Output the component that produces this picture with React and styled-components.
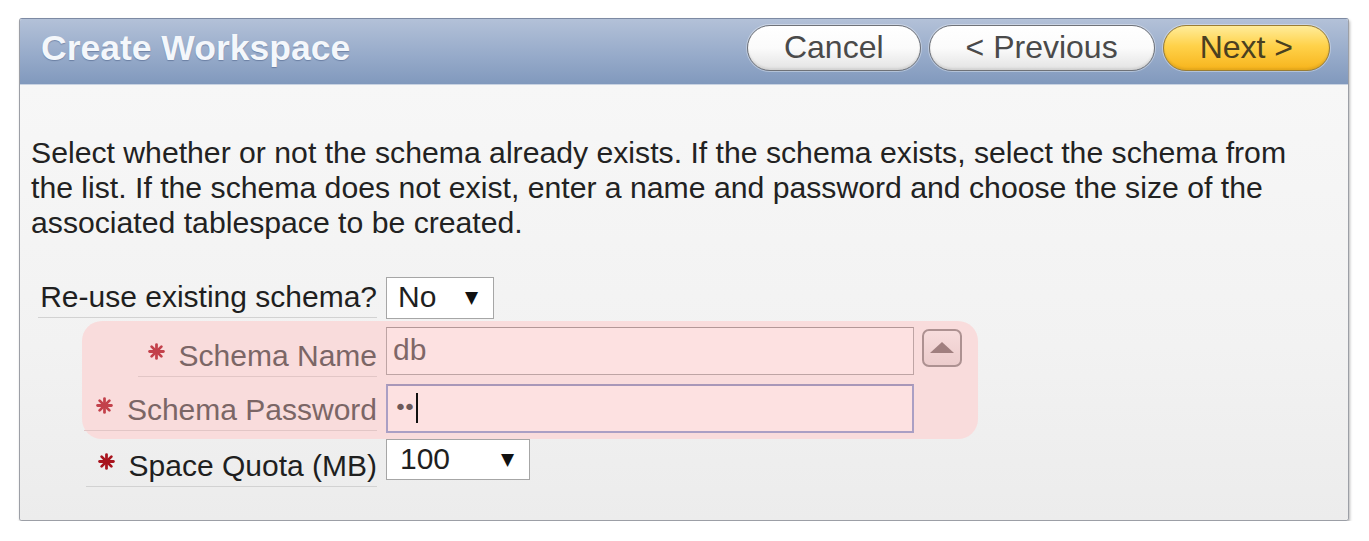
import React from "react";
import styled, { createGlobalStyle } from "styled-components";

const Global = createGlobalStyle`
  html, body {
    margin: 0;
    padding: 0;
    background: #ffffff;
  }
  body {
    font-family: "Liberation Sans", Arial, sans-serif;
  }
`;

// Panel
const Panel = styled.div`
  box-sizing: border-box;
  margin: 18px 0 0 19px;
  width: 1330px;
  height: 503px;
  border: 1px solid #9c9fa6;
  border-top-color: #7d8aa3;
  border-radius: 3px;
  box-shadow: 1px 2px 3px rgba(0, 0, 0, 0.28);
  display: flex;
  flex-direction: column;
  overflow: hidden;
`;

const Header = styled.div`
  box-sizing: border-box;
  height: 66px;
  flex: none;
  display: flex;
  align-items: flex-start;
  justify-content: space-between;
  padding: 6px 18px 0 21px;
  background: linear-gradient(#b3c1d8 0%, #97abca 55%, #8199bd 100%);
  border-bottom: 1px solid #c9d3e2;
`;

const Title = styled.h1`
  margin: 3px 0 0;
  font-size: 35.5px;
  line-height: 40px;
  font-weight: bold;
  color: #f4f7fb;
  text-shadow: 0 1px 1px rgba(60, 80, 120, 0.45);
`;

const Buttons = styled.div`
  display: flex;
  gap: 8px;
`;

const Btn = styled.button`
  box-sizing: border-box;
  height: 46px;
  padding: 0 36px 3px;
  border-radius: 23px;
  border: 1.5px solid ${(p) => (p.primary ? "#9a7d34" : "#6f7278")};
  background: ${(p) =>
    p.primary
      ? "linear-gradient(#ffec9a 0%, #ffd24a 45%, #f7b41c 100%)"
      : "linear-gradient(#ffffff 0%, #fbfbfb 50%, #e3e3e3 100%)"};
  box-shadow: 0 0 0 1px rgba(255, 255, 255, 0.35), inset 0 -2px 2px rgba(0, 0, 0, 0.08);
  font-family: "Liberation Sans", Arial, sans-serif;
  font-size: 32px;
  line-height: 40px;
  color: ${(p) => (p.primary ? "#4a4020" : "#4a4a4a")};
  cursor: pointer;
`;

// Body
const Body = styled.div`
  flex: 1;
  padding: 50px 11px 0;
  background: linear-gradient(#f7f7f7 0%, #f2f2f2 60%, #ececec 100%);
`;

const Intro = styled.p`
  margin: 0;
  max-width: 1295px;
  font-size: 30.2px;
  line-height: 35px;
  color: #222222;
`;

const Form = styled.div`
  margin-top: 37px;
  display: flex;
  flex-direction: column;
`;

const Row = styled.div`
  display: flex;
  align-items: flex-start;
`;

const LabelCell = styled.div`
  width: ${(p) => p.width}px;
  flex: none;
  display: flex;
  justify-content: flex-end;
  margin-top: ${(p) => p.drop || 0}px;
`;

const LabelText = styled.label`
  display: inline-flex;
  align-items: center;
  padding-left: ${(p) => p.pad || 2}px;
  font-size: 30px;
  line-height: 40px;
  color: ${(p) => (p.muted ? "#7b6666" : "#1f1f1f")};
  border-bottom: 1px solid ${(p) => (p.muted ? "#e2c6c6" : "#d2d2d2")};
  white-space: nowrap;
`;

const Star = styled.svg`
  width: 17px;
  height: 17px;
  margin-right: 14px;
  margin-top: -10px;
  flex: none;
`;

const Select = styled.div`
  box-sizing: border-box;
  margin-left: 9px;
  width: ${(p) => p.width}px;
  height: ${(p) => p.height}px;
  display: flex;
  align-items: center;
  justify-content: space-between;
  padding: 0 15px 2px ${(p) => p.padLeft}px;
  background: #ffffff;
  border: 1px solid #a6a6a6;
  font-size: 30px;
  color: #1f1f1f;
`;

const Arrow = styled.span`
  font-family: "DejaVu Sans", sans-serif;
  font-size: 17px;
  color: #111;
`;

const Group = styled.div`
  box-sizing: border-box;
  margin: 2px 0 0 51px;
  width: 896px;
  height: 118px;
  padding: 6px 0 0;
  border-radius: 20px;
  background: #f9dcdc;
  display: flex;
  flex-direction: column;
  gap: 7px;
`;

const Input = styled.div`
  box-sizing: border-box;
  margin-left: 9px;
  width: 528px;
  height: ${(p) => p.height}px;
  display: flex;
  align-items: center;
  padding: 0 0 2px 6px;
  background: #fde1e1;
  border: ${(p) => (p.focused ? "2px solid #aa9fc4" : "1px solid #bea4a4")};
  border-top-color: ${(p) => (p.focused ? "#a897b8" : "#b39797")};
  font-size: 30px;
  color: #7f6767;
`;

const Dots = styled.span`
  font-family: "DejaVu Sans", sans-serif;
  font-size: 22px;
  letter-spacing: -4px;
  color: #6d5a5a;
`;

const Caret = styled.span`
  display: inline-block;
  width: 2px;
  height: 30px;
  margin-left: 4px;
  background: #111;
`;

const UpBtn = styled.div`
  box-sizing: border-box;
  margin-left: 8px;
  margin-top: 2px;
  width: 40px;
  height: 38px;
  border: 2px solid #ad9191;
  border-radius: 7px;
  background: linear-gradient(#f7dcdc 0%, #eccccc 100%);
  display: flex;
  align-items: center;
  justify-content: center;
`;

const Asterisk = ({ muted }) => (
  <Star viewBox="0 0 16 16">
    <g stroke={muted ? "#c3414b" : "#a8141e"} strokeWidth="2.6" strokeLinecap="round">
      <line x1="8" y1="1.5" x2="8" y2="14.5" />
      <line x1="1.5" y1="8" x2="14.5" y2="8" />
      <line x1="3.4" y1="3.4" x2="12.6" y2="12.6" />
      <line x1="12.6" y1="3.4" x2="3.4" y2="12.6" />
    </g>
  </Star>
);

const App = () => {
  return (
    <>
      <Global />
      <Panel>
        <Header>
          <Title>Create Workspace</Title>
          <Buttons>
            <Btn>Cancel</Btn>
            <Btn>&lt; Previous</Btn>
            <Btn primary>Next &gt;</Btn>
          </Buttons>
        </Header>
        <Body>
          <Intro>
            Select whether or not the schema already exists. If the schema exists, select the schema from
            the list. If the schema does not exist, enter a name and password and choose the size of the
            associated tablespace to be created.
          </Intro>
          <Form>
            <Row>
              <LabelCell width={346}>
                <LabelText>Re-use existing schema?</LabelText>
              </LabelCell>
              <Select width={108} height={42} padLeft={11}>
                No <Arrow>▼</Arrow>
              </Select>
            </Row>
            <Group>
              <Row>
                <LabelCell width={295} drop={9}>
                  <LabelText muted pad={10}>
                    <Asterisk muted />
                    Schema Name
                  </LabelText>
                </LabelCell>
                <Input height={48}>db</Input>
                <UpBtn>
                  <svg width="26" height="14" viewBox="0 0 26 14">
                    <polygon points="13,1 25,12 1,12" fill="#a07f7f" />
                  </svg>
                </UpBtn>
              </Row>
              <Row>
                <LabelCell width={295} drop={6}>
                  <LabelText muted pad={12}>
                    <Asterisk muted />
                    Schema Password
                  </LabelText>
                </LabelCell>
                <Input height={49} focused>
                  <Dots>••</Dots>
                  <Caret />
                </Input>
              </Row>
            </Group>
            <Row>
              <LabelCell width={346} drop={7}>
                <LabelText pad={12}>
                  <Asterisk />
                  Space Quota (MB)
                </LabelText>
              </LabelCell>
              <Select width={144} height={41} padLeft={13}>
                100 <Arrow>▼</Arrow>
              </Select>
            </Row>
          </Form>
        </Body>
      </Panel>
    </>
  );
};

export default App;
